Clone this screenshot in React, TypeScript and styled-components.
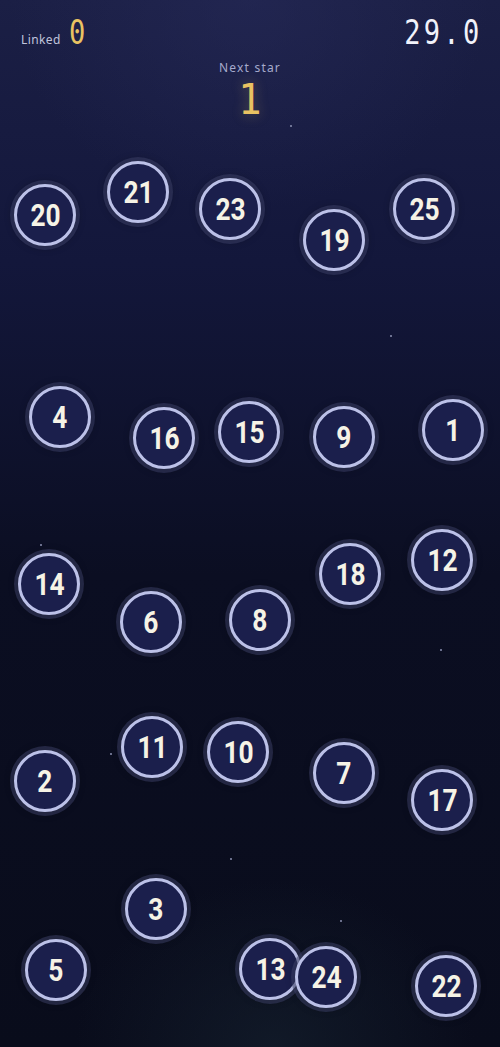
import React from 'react';
import styled, { createGlobalStyle } from 'styled-components';

const GlobalStyle = createGlobalStyle`
  html, body { margin: 0; padding: 0; background: #0b0e20; }
  * { box-sizing: border-box; }
`;

const Sky = styled.div`
  position: relative;
  width: 500px;
  height: 1047px;
  overflow: hidden;
  font-family: "Noto Sans", "DejaVu Sans", sans-serif;
  background:
    radial-gradient(ellipse 60% 25% at 50% 0%, rgba(40, 44, 92, 0.5), transparent 80%),
    radial-gradient(ellipse 50% 20% at 55% 100%, rgba(22, 34, 48, 0.6), transparent 80%),
    linear-gradient(180deg, #1b1f45 0%, #13173b 25%, #0b0e22 55%, #090c1b 100%);
`;

const Hud = styled.header`
  display: flex;
  justify-content: space-between;
  align-items: flex-end;
  padding: 16px 22px 0 21px;
`;

const Score = styled.div`
  display: flex;
  align-items: baseline;
  gap: 8px;
`;

const Label = styled.span`
  font-size: 12px;
  letter-spacing: 0.4px;
  color: #c0c4dc;
`;

const Mono = styled.span<{ $gold?: boolean }>`
  font-family: "DejaVu Sans Mono", "Liberation Mono", monospace;
  font-size: 33px;
  line-height: 1;
  letter-spacing: ${p => (p.$gold ? 0 : 4)}px;
  margin-right: ${p => (p.$gold ? 0 : -4)}px;
  color: ${p => (p.$gold ? '#e9c262' : '#f1f2fa')};
  transform: scaleX(0.82);
  transform-origin: ${p => (p.$gold ? 'left' : 'right')} center;
`;

const NextBox = styled.div`
  display: flex;
  flex-direction: column;
  align-items: center;
  margin-top: 10px;
`;

const NextLabel = styled.span`
  font-size: 12px;
  letter-spacing: 1.2px;
  color: #a6abcc;
`;

const NextNum = styled.span`
  font-family: "DejaVu Sans Mono", "Liberation Mono", monospace;
  font-size: 43px;
  line-height: 1;
  margin-top: 2px;
  color: #e9c262;
  transform: scaleX(0.9);
  text-shadow: 0 0 14px rgba(233, 194, 98, 0.35);
`;

const Star = styled.div`
  position: absolute;
  width: 2px;
  height: 2px;
  border-radius: 50%;
  background: #8b90b0;
`;

const Node = styled.div`
  position: absolute;
  width: 62px;
  height: 62px;
  margin: -31px 0 0 -31px;
  border-radius: 50%;
  border: 3px solid #bcc1e8;
  background: #1b1f4c;
  box-shadow: 0 0 0 4px rgba(62, 66, 106, 0.5), 0 0 10px rgba(0, 0, 0, 0.4);
  display: flex;
  align-items: center;
  justify-content: center;
`;

const NodeNum = styled.span`
  font-family: Roboto, "Noto Sans", sans-serif;
  font-weight: 700;
  font-size: 31px;
  line-height: 1;
  color: #f6f3e6;
  letter-spacing: -0.3px;
  transform: scaleX(0.85);
`;

const nodes: [number, number, number][] = [
  [20, 45, 215], [21, 138, 192], [23, 230, 209], [19, 334, 240], [25, 424, 209],
  [4, 60, 417], [16, 164, 438], [15, 249, 432], [9, 344, 437], [1, 453, 430],
  [14, 49, 584], [6, 151, 622], [8, 260, 620], [18, 350, 574], [12, 442, 560],
  [11, 152, 747], [10, 238, 752], [2, 45, 781], [7, 344, 773], [17, 442, 800],
  [3, 156, 909], [5, 56, 970], [13, 270, 969], [24, 326, 977], [22, 446, 986],
];

const stars: [number, number][] = [
  [290, 125], [390, 335], [40, 544], [440, 649], [110, 753], [230, 858], [340, 920],
];

export default function App() {
  return (
    <Sky>
      <GlobalStyle />
      <Hud>
        <Score>
          <Label>Linked</Label>
          <Mono $gold>0</Mono>
        </Score>
        <Mono>29.0</Mono>
      </Hud>
      <NextBox>
        <NextLabel>Next star</NextLabel>
        <NextNum>1</NextNum>
      </NextBox>
      {stars.map(([x, y], i) => (
        <Star key={i} style={{ left: x, top: y }} />
      ))}
      {nodes.map(([n, x, y]) => (
        <Node key={n} style={{ left: x, top: y }}>
          <NodeNum>{n}</NodeNum>
        </Node>
      ))}
    </Sky>
  );
}
